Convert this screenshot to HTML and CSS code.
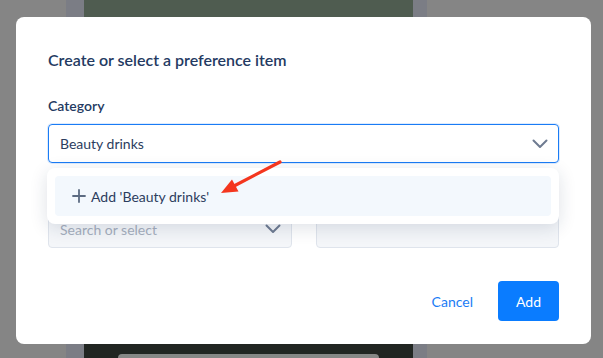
FILE: index.html
```html
<!DOCTYPE html>
<html lang="en">
<head>
    <meta charset="UTF-8">
    <meta name="viewport" content="width=device-width, initial-scale=1.0">
    <title>Create or select a preference item</title>
    <link rel="stylesheet" href="styles.css">
</head>
<body>
    <div class="backdrop">
        <div class="phone">
            <div class="phone-screen">
                <div class="screen-top"></div>
                <div class="screen-bottom">
                    <div class="home-pill"></div>
                </div>
            </div>
        </div>
    </div>

    <div class="modal">
        <h2 class="modal-title">Create or select a preference item</h2>

        <div class="form-group">
            <label class="field-label" for="category">Category</label>
            <div class="select-wrap">
                <div class="select is-open" id="category">
                    <span class="select-value">Beauty drinks</span>
                    <svg class="chevron" width="16" height="10" viewBox="0 0 16 10"><path d="M1.5 1.5 L8 8 L14.5 1.5" fill="none" stroke="currentColor" stroke-width="2" stroke-linecap="round" stroke-linejoin="round"/></svg>
                </div>
                <div class="dropdown">
                    <div class="dropdown-item">
                        <svg class="plus" width="14" height="14" viewBox="0 0 14 14"><path d="M7 1 V13 M1 7 H13" fill="none" stroke="currentColor" stroke-width="1.8" stroke-linecap="round"/></svg>
                        <span>Add 'Beauty drinks'</span>
                    </div>
                </div>
            </div>
        </div>

        <div class="form-row">
            <div class="select is-disabled">
                <span class="select-placeholder">Search or select</span>
                <svg class="chevron" width="16" height="10" viewBox="0 0 16 10"><path d="M1.5 1.5 L8 8 L14.5 1.5" fill="none" stroke="currentColor" stroke-width="2" stroke-linecap="round" stroke-linejoin="round"/></svg>
            </div>
            <div class="select is-disabled"></div>
        </div>

        <div class="modal-footer">
            <button class="btn btn-link">Cancel</button>
            <button class="btn btn-primary">Add</button>
        </div>
    </div>

    <svg class="annotation" width="603" height="358" viewBox="0 0 603 358">
        <line x1="280" y1="162" x2="233" y2="186.5" stroke="#f4361e" stroke-width="3.2" stroke-linecap="round"/>
        <polygon points="221,193 238.5,191.5 232,179.5" fill="#f4361e"/>
    </svg>
</body>
</html>
```

FILE: styles.css
```css
html, body {
    margin: 0;
    padding: 0;
}
body {
    width: 603px;
    height: 358px;
    overflow: hidden;
    position: relative;
    background-color: #858585;
    font-family: "Source Sans Pro", Lato, "Noto Sans", sans-serif;
}

/* page behind the overlay */
.backdrop {
    position: absolute;
    inset: 0;
}
.phone {
    position: absolute;
    left: 66px;
    top: 0;
    width: 361px;
    height: 358px;
    background-color: #7b7d85;
    padding: 0 14px 0 18px;
    box-sizing: border-box;
}
.phone-screen {
    height: 100%;
    display: flex;
    flex-direction: column;
    justify-content: space-between;
}
.screen-top {
    height: 40px;
    background-color: #4f5c50;
}
.screen-bottom {
    height: 30px;
    background-color: #212622;
    display: flex;
    justify-content: center;
    align-items: flex-end;
    overflow: hidden;
}
.home-pill {
    width: 261px;
    height: 4px;
    background-color: #868886;
    border-radius: 14px 14px 0 0;
}

/* modal */
.modal {
    position: absolute;
    left: 16px;
    top: 17px;
    width: 575px;
    box-sizing: border-box;
    padding: 32px 32px 23px;
    background-color: #fff;
    border-radius: 8px;
}
.modal-title {
    margin: 0 0 25px;
    font-size: 16px;
    line-height: 22px;
    font-weight: 600;
    color: #243a62;
}
.field-label {
    display: block;
    margin-bottom: 8px;
    font-size: 14px;
    line-height: 20px;
    font-weight: 600;
    color: #243a62;
}
.select-wrap {
    position: relative;
}
.select {
    height: 39px;
    box-sizing: border-box;
    border: 1px solid #dfe4ec;
    border-radius: 4px;
    padding: 0 10px 0 11px;
    display: flex;
    align-items: center;
    justify-content: space-between;
    font-size: 14px;
    color: #2c3d5e;
}
.select.is-open {
    border-color: #1a7cf5;
    box-shadow: 0 0 0 1px rgba(26, 124, 245, 0.15);
}
.select.is-disabled {
    height: 38px;
    background-color: #f4f6f9;
}
.select-placeholder {
    color: #a5aebd;
}
.chevron {
    color: #6e7b91;
}
.dropdown {
    position: absolute;
    left: -1px;
    right: 0;
    top: 44px;
    z-index: 2;
    padding: 8px;
    background-color: #fff;
    border-radius: 8px;
    box-shadow: 0 4px 18px rgba(20, 40, 80, 0.14);
}
.dropdown-item {
    height: 40px;
    display: flex;
    align-items: center;
    gap: 5px;
    padding-left: 17px;
    background-color: #f3f8fd;
    border-radius: 4px;
    font-size: 14px;
    color: #2c3d5e;
}
.plus {
    color: #5c6b82;
}
.form-row {
    margin-top: 47px;
    display: grid;
    grid-template-columns: 1fr 1fr;
    gap: 24px;
}
.modal-footer {
    margin-top: 33px;
    display: flex;
    justify-content: flex-end;
    align-items: center;
    gap: 13px;
}
.btn {
    height: 40px;
    border: none;
    border-radius: 4px;
    font-family: inherit;
    font-size: 14px;
    cursor: pointer;
}
.btn-link {
    padding: 0 12px;
    background: none;
    color: #1a7cf5;
}
.btn-primary {
    width: 61px;
    background-color: #0a7cff;
    color: #fff;
}

.annotation {
    position: absolute;
    left: 0;
    top: 0;
    z-index: 5;
    pointer-events: none;
}
```
